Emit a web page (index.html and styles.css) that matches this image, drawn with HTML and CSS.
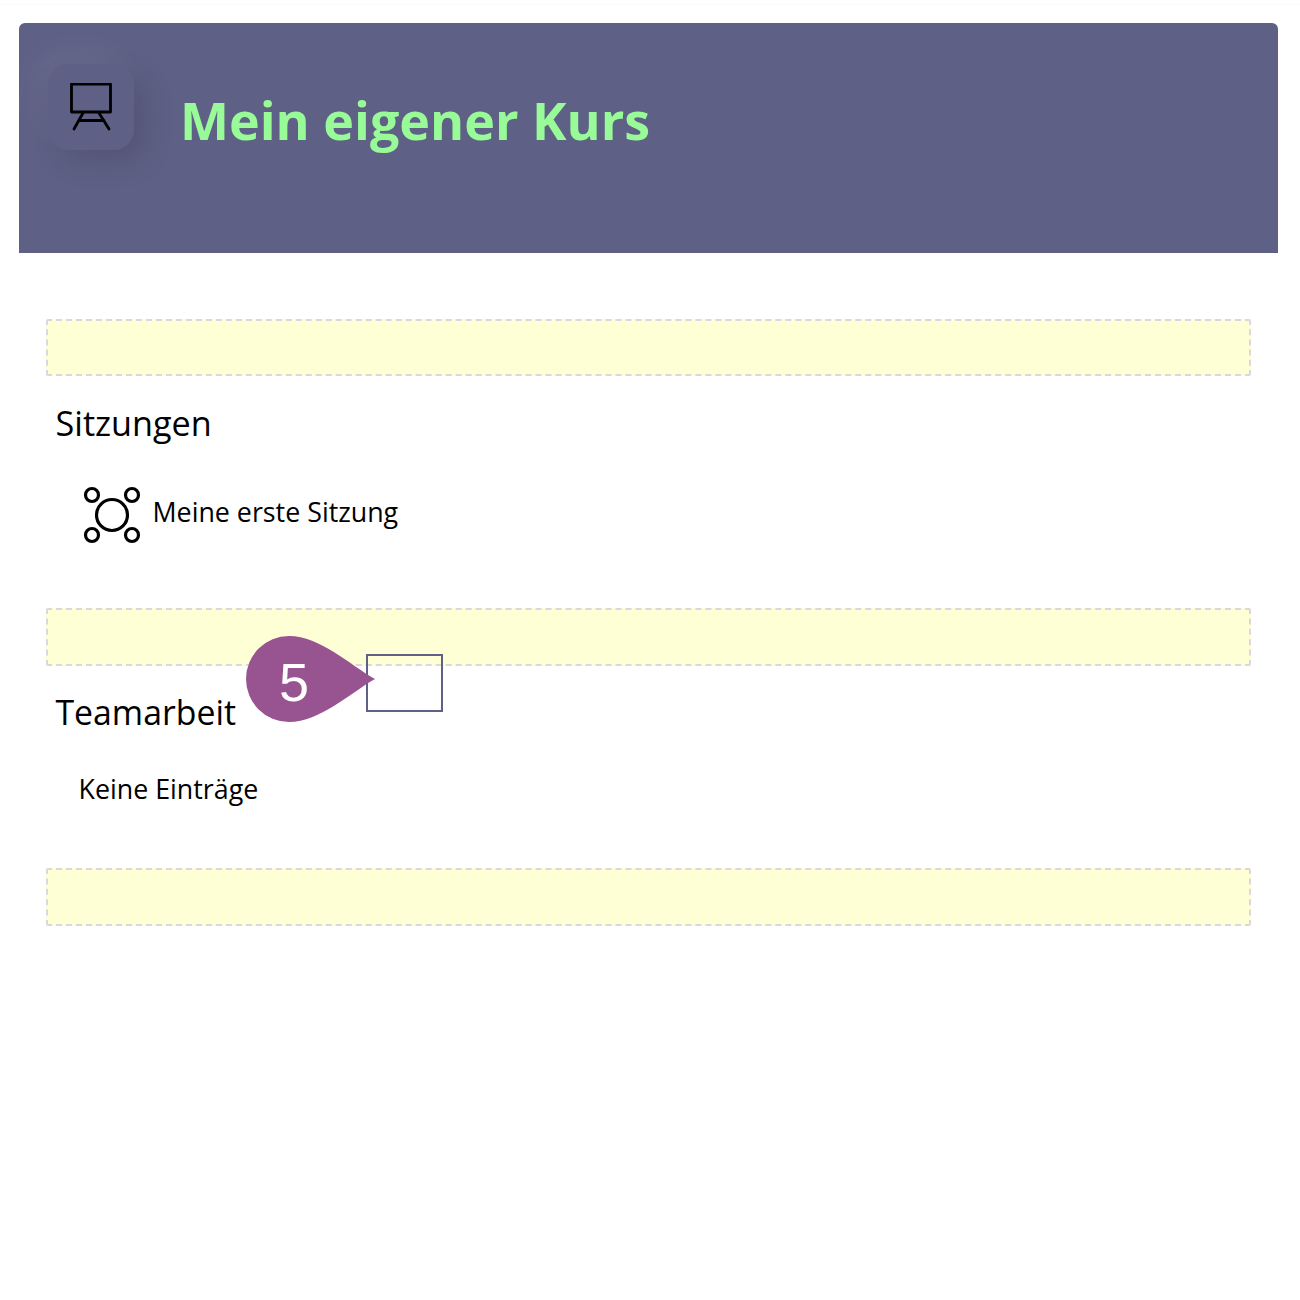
FILE: index.html
```html
<!DOCTYPE html>
<html lang="de">
<head>
<meta charset="utf-8">
<title>Mein eigener Kurs</title>
<link rel="stylesheet" href="styles.css">
</head>
<body>
<div class="page">
  <div class="top-rule"></div>
  <header class="hero">
    <div class="hero-icon">
      <svg class="board" viewBox="0 0 44 48" width="44" height="48" aria-hidden="true">
        <rect x="2.5" y="1" width="39" height="28" />
        <path d="M14 30 L5 46 M30 30 L40 46 M10 37.5 H35" />
      </svg>
    </div>
    <h1 class="hero-title">Mein eigener Kurs</h1>
  </header>
  <main class="content">
    <div class="dropzone"></div>
    <section class="block block-sessions">
      <h2 class="block-title">Sitzungen</h2>
      <div class="entry">
        <svg class="session-icon" viewBox="0 0 58 58" width="58" height="58" aria-hidden="true">
          <circle cx="29" cy="29" r="15.5"/>
          <circle cx="9" cy="9" r="6.5"/>
          <circle cx="49" cy="9" r="6.5"/>
          <circle cx="9" cy="49" r="6.5"/>
          <circle cx="49" cy="49" r="6.5"/>
        </svg>
        <span class="entry-label">Meine erste Sitzung</span>
      </div>
    </section>
    <div class="dropzone"></div>
    <section class="block block-team">
      <h2 class="block-title">Teamarbeit</h2>
      <p class="empty">Keine Einträge</p>
    </section>
    <div class="dropzone"></div>
  </main>
</div>
<div class="highlight"></div>
<div class="marker">
  <svg viewBox="0 0 130 86" width="130" height="86" aria-hidden="true">
    <path d="M129 43 C104 57 74 86 43 86 A43 43 0 1 1 43 0 C74 0 104 29 129 43 Z"/>
  </svg>
  <span class="marker-num">5</span>
</div>
</body>
</html>
```

FILE: styles.css
```css
* { box-sizing: border-box; }
html, body { margin: 0; background: #fff; }
body { font-family: "Open Sans", "Noto Sans", sans-serif; color: #000; min-height: 1300px; position: relative; }
.page { padding: 4px 22px 0 19px; }
.top-rule { height: 1px; margin: 0 -22px 18px -19px; background: #fbfbfb; }
.hero {
  height: 230px;
  background: #5e6086;
  border-radius: 6px 6px 0 0;
  padding: 41px 30px 0 29px;
  display: flex;
  align-items: flex-start;
  gap: 46px;
}
.hero-icon {
  width: 86px;
  height: 86px;
  flex: none;
  border-radius: 20px;
  background: #5e6086;
  box-shadow: 12px 12px 30px rgba(0,0,0,.12), -12px -12px 30px rgba(255,255,255,.06), -25px 0 40px -20px rgba(0,0,0,.04);
  display: flex;
  justify-content: center;
  padding-top: 19px;
}
.board { fill: none; stroke: #000; stroke-width: 2.8; stroke-linecap: round; stroke-linejoin: round; }
.hero-title {
  margin: 20px 0 0;
  font-size: 52px;
  line-height: 72px;
  font-weight: 700;
  color: #98fb98;
  white-space: nowrap;
}
.content { padding: 65.5px 27px 0 27px; }
.dropzone {
  height: 57.5px;
  background: #ffffd6;
  border: 2px dashed #dbd6e0;
  border-radius: 2px;
}
.block { padding-left: 9.5px; }
.block-sessions { height: 232px; }
.block-team { height: 202.5px; }
.block-title {
  margin: 0;
  padding-top: 23px;
  font-size: 34.2px;
  line-height: 48px;
  font-weight: 400;
}
.block-team .block-title { padding-top: 22px; font-size: 33.8px; }
.entry {
  display: flex;
  align-items: center;
  gap: 11.5px;
  margin: 39px 0 0 27.5px;
  font-size: 26.8px;
  line-height: 40px;
}
.entry-label { padding-bottom: 6px; }
.session-icon { flex: none; fill: none; stroke: #000; stroke-width: 3.2; }
.empty {
  margin: 33px 0 0 23px;
  font-size: 26.8px;
  line-height: 40px;
}
.highlight {
  position: absolute;
  left: 366px;
  top: 654px;
  width: 77px;
  height: 58px;
  border: 2px solid #5e6086;
}
.marker {
  position: absolute;
  left: 246px;
  top: 636px;
  width: 130px;
  height: 86px;
}
.marker svg { display: block; fill: #985490; }
.marker-num {
  position: absolute;
  left: 33px;
  top: 15px;
  font-family: "Liberation Sans", Arial, sans-serif;
  font-size: 54px;
  line-height: 62px;
  color: #fff;
}
```
